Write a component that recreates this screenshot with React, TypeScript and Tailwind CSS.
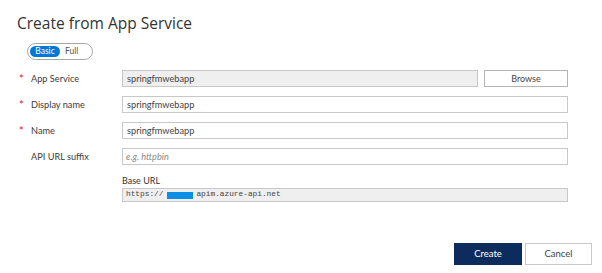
import React from "react";

const font = { fontFamily: 'Lato, "Open Sans", sans-serif' };

const Field = ({
  label,
  required,
  children,
}: {
  label: string;
  required?: boolean;
  children: React.ReactNode;
}) => (
  <div className="flex items-center h-[17px]">
    <div className="w-[12px] text-[11px] text-[#e81123] leading-none">{required ? "*" : ""}</div>
    <div className="w-[91px] text-[9.2px] text-[#3b3b3b]">{label}</div>
    <div className="flex flex-1 gap-[6px]">{children}</div>
  </div>
);

export default function App() {
  return (
    <div className="w-[602px] h-[273px] bg-white relative overflow-hidden" style={font}>
      <div className="pl-[17px] pt-[13px]">
        <h1
          className="text-[15.5px] text-[#333] leading-[20px]"
          style={{ fontFamily: '"Open Sans", sans-serif' }}
        >
          Create from App Service
        </h1>
        <div className="mt-[10px] ml-[10px] flex items-center w-[66px] h-[17px] rounded-full border border-[#a6a6a6] px-[2px] gap-[5px]">
          <span className="h-[11px] w-[30px] rounded-full bg-[#0078d4] text-white text-[8.5px] leading-[11px] text-center">Basic</span>
          <span className="text-[8.5px] text-[#555] leading-[11px]">Full</span>
        </div>
      </div>

      <div className="mt-[10px] pl-[19px] w-[568px] flex flex-col gap-[9px]">
        <Field label="App Service" required>
          <div className="flex-1 h-[17px] border border-[#c8c8c8] bg-[#efefef] text-[9.2px] text-[#444] px-[4px] leading-[15px]">springfmwebapp</div>
          <button className="w-[84px] h-[17px] border border-[#b4b4b4] bg-white text-[9px] text-[#444] leading-[15px]">Browse</button>
        </Field>
        <Field label="Display name" required>
          <div className="flex-1 h-[17px] border border-[#c8c8c8] bg-white text-[9.2px] text-[#444] px-[4px] leading-[15px]">springfmwebapp</div>
        </Field>
        <Field label="Name" required>
          <div className="flex-1 h-[17px] border border-[#c8c8c8] bg-white text-[9.2px] text-[#444] px-[4px] leading-[15px]">springfmwebapp</div>
        </Field>
        <Field label="API URL suffix">
          <div className="flex-1 h-[17px] border border-[#c8c8c8] bg-white text-[9.2px] text-[#888] italic px-[3px] leading-[15px]">e.g. httpbin</div>
        </Field>
      </div>

      <div className="ml-[122px] mt-[9px] w-[446px]">
        <div className="text-[9px] text-[#333] leading-[13px]">Base URL</div>
        <div
          className="mt-[1px] h-[14px] border border-[#c8c8c8] bg-[#efefef] flex items-center px-[3px] text-[7.8px] text-[#444]"
          style={{ fontFamily: '"Liberation Mono", monospace' }}
        >
          <span>https://</span>
          <span className="ml-[4px] w-[26px] h-[7px] bg-[#0a8ee6]" />
          <span className="ml-[3px]">apim.azure-api.net</span>
        </div>
      </div>

      <div className="absolute left-[454px] top-[243px] flex gap-[3px]">
        <button className="w-[68px] h-[22px] bg-[#0b2c5c] text-white text-[9.5px]">Create</button>
        <button className="w-[67px] h-[22px] border border-[#c8c8c8] bg-white text-[9.5px] text-[#444]">Cancel</button>
      </div>
    </div>
  );
}
